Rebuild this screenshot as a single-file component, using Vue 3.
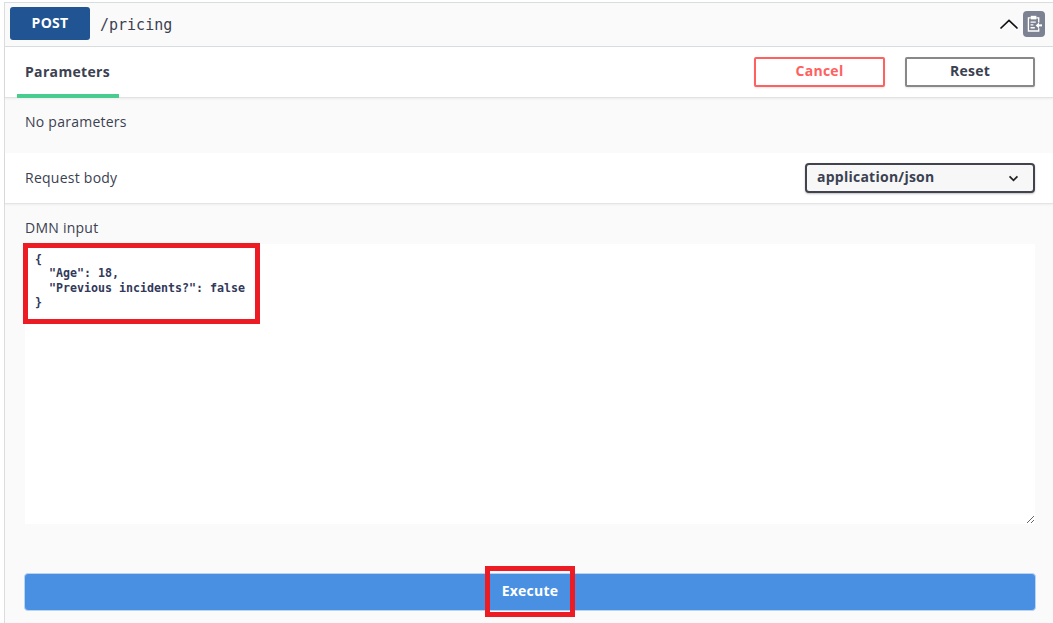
<script setup>
const body = `{
  "Age": 18,
  "Previous incidents?": false
}`
</script>

<template>
  <div class="page">
    <div class="opblock">
      <div class="summary">
        <span class="method">POST</span>
        <span class="path">/pricing</span>
        <svg class="chevron" width="20" height="20" viewBox="0 0 20 20" fill="none" stroke="#111" stroke-width="1.7">
          <path d="M1.5 14.5 L10 6.5 L18.5 14.5" />
        </svg>
        <span class="copy">
          <svg width="15" height="17" viewBox="0 0 16 18" fill="none" stroke="#fff" stroke-width="1.4">
            <path d="M4 3H1.5v14h11v-3" />
            <path d="M10 3h2.5v5" />
            <rect x="4" y="0.8" width="6" height="3.8" fill="#fff" stroke="none" />
            <path d="M3.8 7.5h5.5M3.8 10.5h3M3.8 13.5h4.5" />
            <path d="M16 11h-4.5" stroke-width="2.2" />
            <path d="M12.8 7.8 L9.2 11 L12.8 14.2 Z" fill="#fff" stroke="none" />
          </svg>
        </span>
      </div>
      <div class="tabs">
        <div class="tab">Parameters</div>
        <div class="actions">
          <button class="btn cancel">Cancel</button>
          <button class="btn reset">Reset</button>
        </div>
      </div>
      <div class="noparams">No parameters</div>
      <div class="reqhead">
        <span class="reqlabel">Request body</span>
        <div class="select">
          <span>application/json</span>
          <svg width="11" height="7" viewBox="0 0 12 8" fill="none" stroke="#222" stroke-width="2">
            <path d="M1.5 1.5 L6 6 L10.5 1.5" />
          </svg>
        </div>
      </div>
      <div class="bodywrap">
        <div class="label">DMN input</div>
        <div class="areawrap">
          <textarea class="area" :value="body" spellcheck="false"></textarea>
          <div class="mark codemark"></div>
        </div>
        <div class="execwrap">
          <button class="exec">Execute</button>
          <div class="mark execmark"></div>
        </div>
      </div>
    </div>
  </div>
</template>

<style>
html, body { overflow: hidden; background: #fff; }
</style>

<style scoped>
.page {
  width: 1053px;
  height: 623px;
  overflow: hidden;
  padding-top: 2px;
  box-sizing: border-box;
  font-family: "Open Sans", "Noto Sans", sans-serif;
  color: #3b4151;
  letter-spacing: 0.25px;
}
.opblock {
  margin-left: 4px;
  width: 1060px;
  height: 640px;
  border-left: 1px solid #d9dddd;
  border-top: 1px solid #d9dddd;
  background: #fafafa;
  box-sizing: border-box;
}
.summary {
  height: 44px;
  box-sizing: border-box;
  border-bottom: 1px solid #d8dee0;
  display: flex;
  align-items: center;
  padding: 0 8px 2px 5px;
  width: 1048px;
}
.method {
  width: 80px;
  height: 33px;
  background: #205493;
  border-radius: 3px;
  color: #fff;
  font-weight: 700;
  font-size: 14px;
  line-height: 32px;
  text-align: center;
}
.path {
  margin-left: 10px;
  font-family: "DejaVu Sans Mono", monospace;
  font-size: 15px;
  letter-spacing: 0;
  flex: 1;
  padding-top: 2px;
}
.chevron { margin-right: 4px; }
.copy {
  width: 22px;
  height: 26px;
  border-radius: 4px;
  background: #7d8293;
  display: flex;
  align-items: center;
  justify-content: center;
}
.tabs {
  height: 51px;
  background: #fff;
  border-bottom: 1px solid #e2e2e2;
  box-shadow: 0 1px 2px rgba(0,0,0,.06);
  box-sizing: border-box;
  display: flex;
  justify-content: space-between;
  padding-left: 12px;
  width: 1048px;
  position: relative;
}
.tab {
  width: 102px;
  height: 51px;
  box-sizing: border-box;
  border-bottom: 4px solid #49cc90;
  font-weight: 700;
  font-size: 14px;
  letter-spacing: 0.33px;
  padding: 14px 0 0 8px;
  line-height: 22px;
}
.actions {
  display: flex;
  gap: 20px;
  padding: 10px 18px 0 0;
}
.btn {
  width: 131px;
  height: 30px;
  box-sizing: border-box;
  background: #fff;
  border-radius: 2px;
  font: 700 14px "Open Sans", "Noto Sans", sans-serif;
  letter-spacing: 0.25px;
  padding: 0 0 3px;
  box-shadow: 0 1px 2px rgba(0,0,0,.1);
}
.cancel { border: 2px solid #ff6060; color: #ff6060; }
.reset { width: 130px; border: 2px solid #888; color: #3b4151; }
.noparams {
  height: 55px;
  box-sizing: border-box;
  padding: 13px 0 0 20px;
  font-size: 14px;
  line-height: 22px;
}
.reqhead {
  height: 51px;
  width: 1048px;
  background: #fff;
  border-bottom: 1px solid #e4e4e4;
  box-shadow: 0 1px 2px rgba(0,0,0,.05);
  box-sizing: border-box;
  display: flex;
  align-items: center;
  justify-content: space-between;
  padding: 0 18px 0 20px;
  font-size: 14px;
}
.reqlabel { margin-top: -2px; }
.select {
  width: 230px;
  height: 30px;
  box-sizing: border-box;
  border: 2px solid #41444e;
  border-radius: 4px;
  background: #f7f7f7;
  display: flex;
  align-items: center;
  justify-content: space-between;
  padding: 0 14px 4px 10px;
  font-weight: 700;
  font-size: 14px;
  box-shadow: 0 1px 2px rgba(0,0,0,.25);
}
.select svg { margin-top: 4px; }
.bodywrap {
  padding: 13px 0 0 20px;
}
.label {
  font-size: 14px;
  line-height: 22px;
  height: 27px;
}
.areawrap {
  position: relative;
  width: 1010px;
  height: 280px;
}
.area {
  display: block;
  width: 1010px;
  height: 280px;
  box-sizing: border-box;
  border: none;
  outline: none;
  background: #fff;
  padding: 8px 10px;
  font: 700 11.63px/14.3px "DejaVu Sans Mono", monospace;
  letter-spacing: 0;
  color: #32395a;
  resize: both;
}
.mark {
  position: absolute;
  border: 5px solid #ed1c24;
  box-sizing: border-box;
  pointer-events: none;
}
.codemark {
  left: -2px;
  top: -1px;
  width: 237px;
  height: 81px;
}
.execwrap {
  position: relative;
  margin-top: 49px;
  width: 1012px;
  margin-left: -1px;
  height: 38px;
}
.exec {
  display: block;
  width: 1012px;
  height: 38px;
  box-sizing: border-box;
  background: #4990e2;
  border: 1px solid #b9d3f3;
  border-radius: 4px;
  color: #fff;
  font: 700 14px "Open Sans", "Noto Sans", sans-serif;
  letter-spacing: 0.25px;
  padding: 0 0 4px;
}
.execmark {
  left: 461px;
  top: -7px;
  width: 90px;
  height: 51px;
}
</style>
